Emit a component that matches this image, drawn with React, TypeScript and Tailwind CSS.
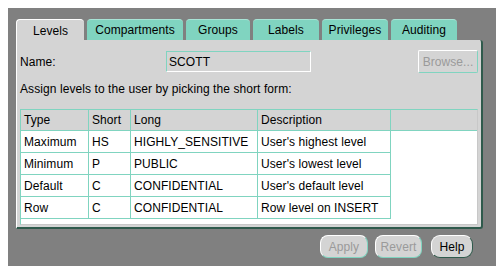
import React from "react";

const tabs = ["Levels", "Compartments", "Groups", "Labels", "Privileges", "Auditing"];
const tabWidths = ["w-[68px]", "w-[96px]", "w-[64px]", "w-[66px]", "w-[66px]", "w-[66px]"];

const rows = [
  ["Maximum", "HS", "HIGHLY_SENSITIVE", "User's highest level"],
  ["Minimum", "P", "PUBLIC", "User's lowest level"],
  ["Default", "C", "CONFIDENTIAL", "User's default level"],
  ["Row", "C", "CONFIDENTIAL", "Row level on INSERT"],
];

export default function App() {
  return (
    <div className="w-[496px] h-[274px] bg-white pt-2 pl-2 pb-2 font-['Liberation_Sans',Arial,sans-serif] text-[12px] tracking-[0.08px] text-black">
      <div className="h-full bg-[#808080] pl-2 pr-[13px] pt-[11px] flex flex-col">
        {/* tabs */}
        <div className="flex gap-[3px] h-[21px] items-end">
          {tabs.map((t, i) => (
            <div
              key={t}
              className={`${tabWidths[i]} h-[21px] rounded-t-[4px] flex items-center justify-center ${
                i === 0
                  ? "bg-[#d4d4d4] border-t border-l border-white -mb-px h-[22px]"
                  : "bg-[#80d4c0] border-t border-[#a8e4d6]"
              }`}
            >
              {t}
            </div>
          ))}
        </div>

        {/* panel */}
        <div className="h-[189px] bg-[#d4d4d4] border-l border-white border-r-2 border-b-2 border-r-[#2f5a4c] border-b-[#2f5a4c] rounded-br-[3px] rounded-tr-[3px] px-[3px] pt-[10px]">
          <div className="flex items-center h-[23px]">
            <div className="w-[146px]">Name:</div>
            <div className="w-[145px] h-[21px] bg-[#d4d4d4] border-t border-l border-[#80d4c0] border-r border-b border-r-white border-b-white flex items-center pl-[2px]">
              SCOTT
            </div>
            <div className="flex-1" />
            <div className="w-[60px] h-[23px] rounded-[2px] border border-white border-r-[#80d4c0] border-b-[#80d4c0] flex items-center justify-center text-[#9a9a9a]">
              Browse...
            </div>
          </div>
          <div className="mt-[6px] h-[20px] flex items-center">
            Assign levels to the user by picking the short form:
          </div>
          <div className="mt-[10px] h-[116px] bg-white border border-[#80d4c0] border-b-[#c8c8c8] border-r-[#c8c8c8] overflow-hidden">
            <div className="flex h-[21px] bg-[#d4d4d4] border-b border-[#80d4c0]">
              <div className="w-[68px] px-[3px] flex items-center border-r border-[#80d4c0]">Type</div>
              <div className="w-[42px] px-[3px] flex items-center border-r border-[#80d4c0]">Short</div>
              <div className="w-[127px] px-[3px] flex items-center border-r border-[#80d4c0]">Long</div>
              <div className="w-[133px] px-[3px] flex items-center border-r border-[#80d4c0]">Description</div>
              <div className="flex-1" />
            </div>
            {rows.map((r) => (
              <div key={r[0]} className="flex h-[22px]">
                <div className="w-[68px] px-[3px] flex items-center border-r border-b border-[#80d4c0]">{r[0]}</div>
                <div className="w-[42px] px-[3px] flex items-center border-r border-b border-[#80d4c0]">{r[1]}</div>
                <div className="w-[127px] px-[3px] flex items-center border-r border-b border-[#80d4c0]">{r[2]}</div>
                <div className="w-[133px] px-[3px] flex items-center border-r border-b border-[#80d4c0]">{r[3]}</div>
              </div>
            ))}
          </div>
        </div>

        {/* buttons */}
        <div className="flex justify-end gap-[7px] mt-[6px] pr-[10px]">
          <div className="w-[48px] h-[23px] rounded-[8px] bg-[#d4d4d4] border border-white border-r-[#80d4c0] border-b-[#80d4c0] flex items-center justify-center text-[#9a9a9a]">
            Apply
          </div>
          <div className="w-[47px] h-[23px] rounded-[8px] bg-[#d4d4d4] border border-white border-r-[#80d4c0] border-b-[#80d4c0] flex items-center justify-center text-[#9a9a9a]">
            Revert
          </div>
          <div className="w-[42px] h-[23px] ml-[2px] rounded-[9px] bg-[#d4d4d4] border border-white border-r-[#2f5a4c] border-b-[#2f5a4c] flex items-center justify-center">
            Help
          </div>
        </div>
      </div>
    </div>
  );
}
